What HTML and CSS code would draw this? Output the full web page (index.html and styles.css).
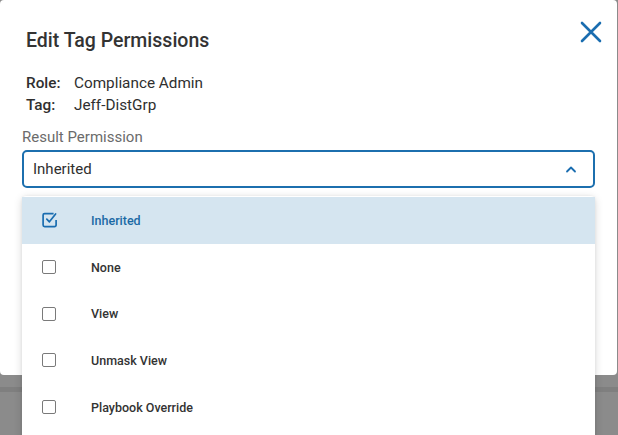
FILE: index.html
```html
<!DOCTYPE html>
<html>
<head>
<meta charset="utf-8">
<link rel="stylesheet" href="styles.css">
</head>
<body>
<div class="screen">
  <div class="dialog">
    <div class="dialog-head">
      <h1 class="title">Edit Tag Permissions</h1>
      <button class="close" aria-label="Close">
        <svg width="22" height="22" viewBox="0 0 22 22"><path d="M2 2 L20 20 M20 2 L2 20" stroke="#1a6db0" stroke-width="2.6" stroke-linecap="round" fill="none"/></svg>
      </button>
    </div>
    <div class="meta">
      <div class="meta-row"><span class="meta-key">Role:</span><span class="meta-val">Compliance Admin</span></div>
      <div class="meta-row"><span class="meta-key">Tag:</span><span class="meta-val">Jeff-DistGrp</span></div>
    </div>
    <div class="field">
      <div class="field-label">Result Permission</div>
      <div class="select">
        <span class="select-value">Inherited</span>
        <svg class="chev" width="12" height="8" viewBox="0 0 12 8"><path d="M2 6.5 L6 2.5 L10 6.5" stroke="#1a6db0" stroke-width="1.8" fill="none" stroke-linecap="round" stroke-linejoin="round"/></svg>
      </div>
    </div>
    <div class="footer-ghost"></div>
  </div>
  <div class="backdrop-band"></div>

  <ul class="menu">
    <li class="opt selected">
      <svg class="cb-checked" width="18" height="18" viewBox="0 0 18 18"><path d="M12.6 2.6 H3.6 A1.5 1.5 0 0 0 2.1 4.1 V14.1 A1.5 1.5 0 0 0 3.6 15.6 H13.6 A1.5 1.5 0 0 0 15.1 14.1 V9" stroke="#1a6db0" stroke-width="1.7" fill="none"/><path d="M5.8 8.2 L8.4 10.8 L14.6 3" stroke="#1a6db0" stroke-width="1.7" fill="none" stroke-linecap="round" stroke-linejoin="round"/></svg>
      <span class="opt-text">Inherited</span>
    </li>
    <li class="opt"><span class="cb"></span><span class="opt-text">None</span></li>
    <li class="opt"><span class="cb"></span><span class="opt-text">View</span></li>
    <li class="opt"><span class="cb"></span><span class="opt-text">Unmask View</span></li>
    <li class="opt"><span class="cb"></span><span class="opt-text">Playbook Override</span></li>
  </ul>
</div>
</body>
</html>
```
FILE: styles.css
```css
* { box-sizing: border-box; }
html, body { margin: 0; padding: 0; }
body {
  width: 618px;
  height: 435px;
  overflow: hidden;
  background: #8b8b8b;
  font-family: Roboto, "Liberation Sans", sans-serif;
}
.screen {
  position: relative;
  width: 618px;
  height: 435px;
}
.dialog {
  width: 617px;
  height: 375px;
  background: #fff;
  border-radius: 4px;
  padding: 0 22px 0 26px;
  display: flex;
  flex-direction: column;
}
.dialog-head {
  display: flex;
  justify-content: space-between;
  align-items: flex-start;
  padding-top: 30px;
}
.title {
  margin: 0;
  font-size: 19.5px;
  font-weight: 500;
  line-height: 22px;
  color: #333;
  letter-spacing: 0;
}
.close {
  border: 0;
  background: none;
  padding: 0;
  margin: -9px -7px 0 0;
  width: 22px;
  height: 22px;
  display: flex;
}
.meta {
  margin-top: 20px;
  display: flex;
  flex-direction: column;
}
.meta-row {
  display: flex;
  font-size: 15.3px;
  line-height: 22px;
  color: #2f2f2f;
}
.meta-key {
  width: 48px;
  font-weight: 500;
}
.field {
  margin: 11px 0 0 -4px;
}
.field-label {
  font-size: 15px;
  line-height: 20px;
  color: #6b6b6b;
  margin-bottom: 3px;
}
.select {
  height: 38px;
  border: 2px solid #1c6fae;
  border-radius: 5px;
  display: flex;
  align-items: center;
  justify-content: space-between;
  padding: 0 16px 0 9px;
}
.select-value {
  font-size: 15px;
  color: #2f2f2f;
}
.chev { display: block; }
.footer-ghost { flex: 1; }
.backdrop-band {
  height: 5px;
  margin-top: 12px;
  background: #7f7f7f;
}
.menu {
  position: absolute;
  left: 22px;
  top: 196px;
  width: 573px;
  height: 260px;
  margin: 0;
  padding: 1px 0 0;
  list-style: none;
  background: #fff;
  border-radius: 4px;
  box-shadow: 0 2px 8px rgba(0,0,0,0.16), 0 0 3px rgba(0,0,0,0.06);
}
.opt {
  height: 46.7px;
  display: flex;
  align-items: center;
  padding-left: 19px;
}
.opt.selected { background: #d5e5f0; }
.cb {
  width: 14px;
  height: 14px;
  border: 1.6px solid #7a7a7a;
  border-radius: 2px;
  margin-left: 1px;
  flex: none;
}
.cb-checked { flex: none; margin: 0 -3px 0 0; }
.opt-text {
  margin-left: 35px;
  font-size: 12.5px;
  font-weight: 500;
  color: #333;
}
.selected .opt-text { color: #1c6aa5; }
```
